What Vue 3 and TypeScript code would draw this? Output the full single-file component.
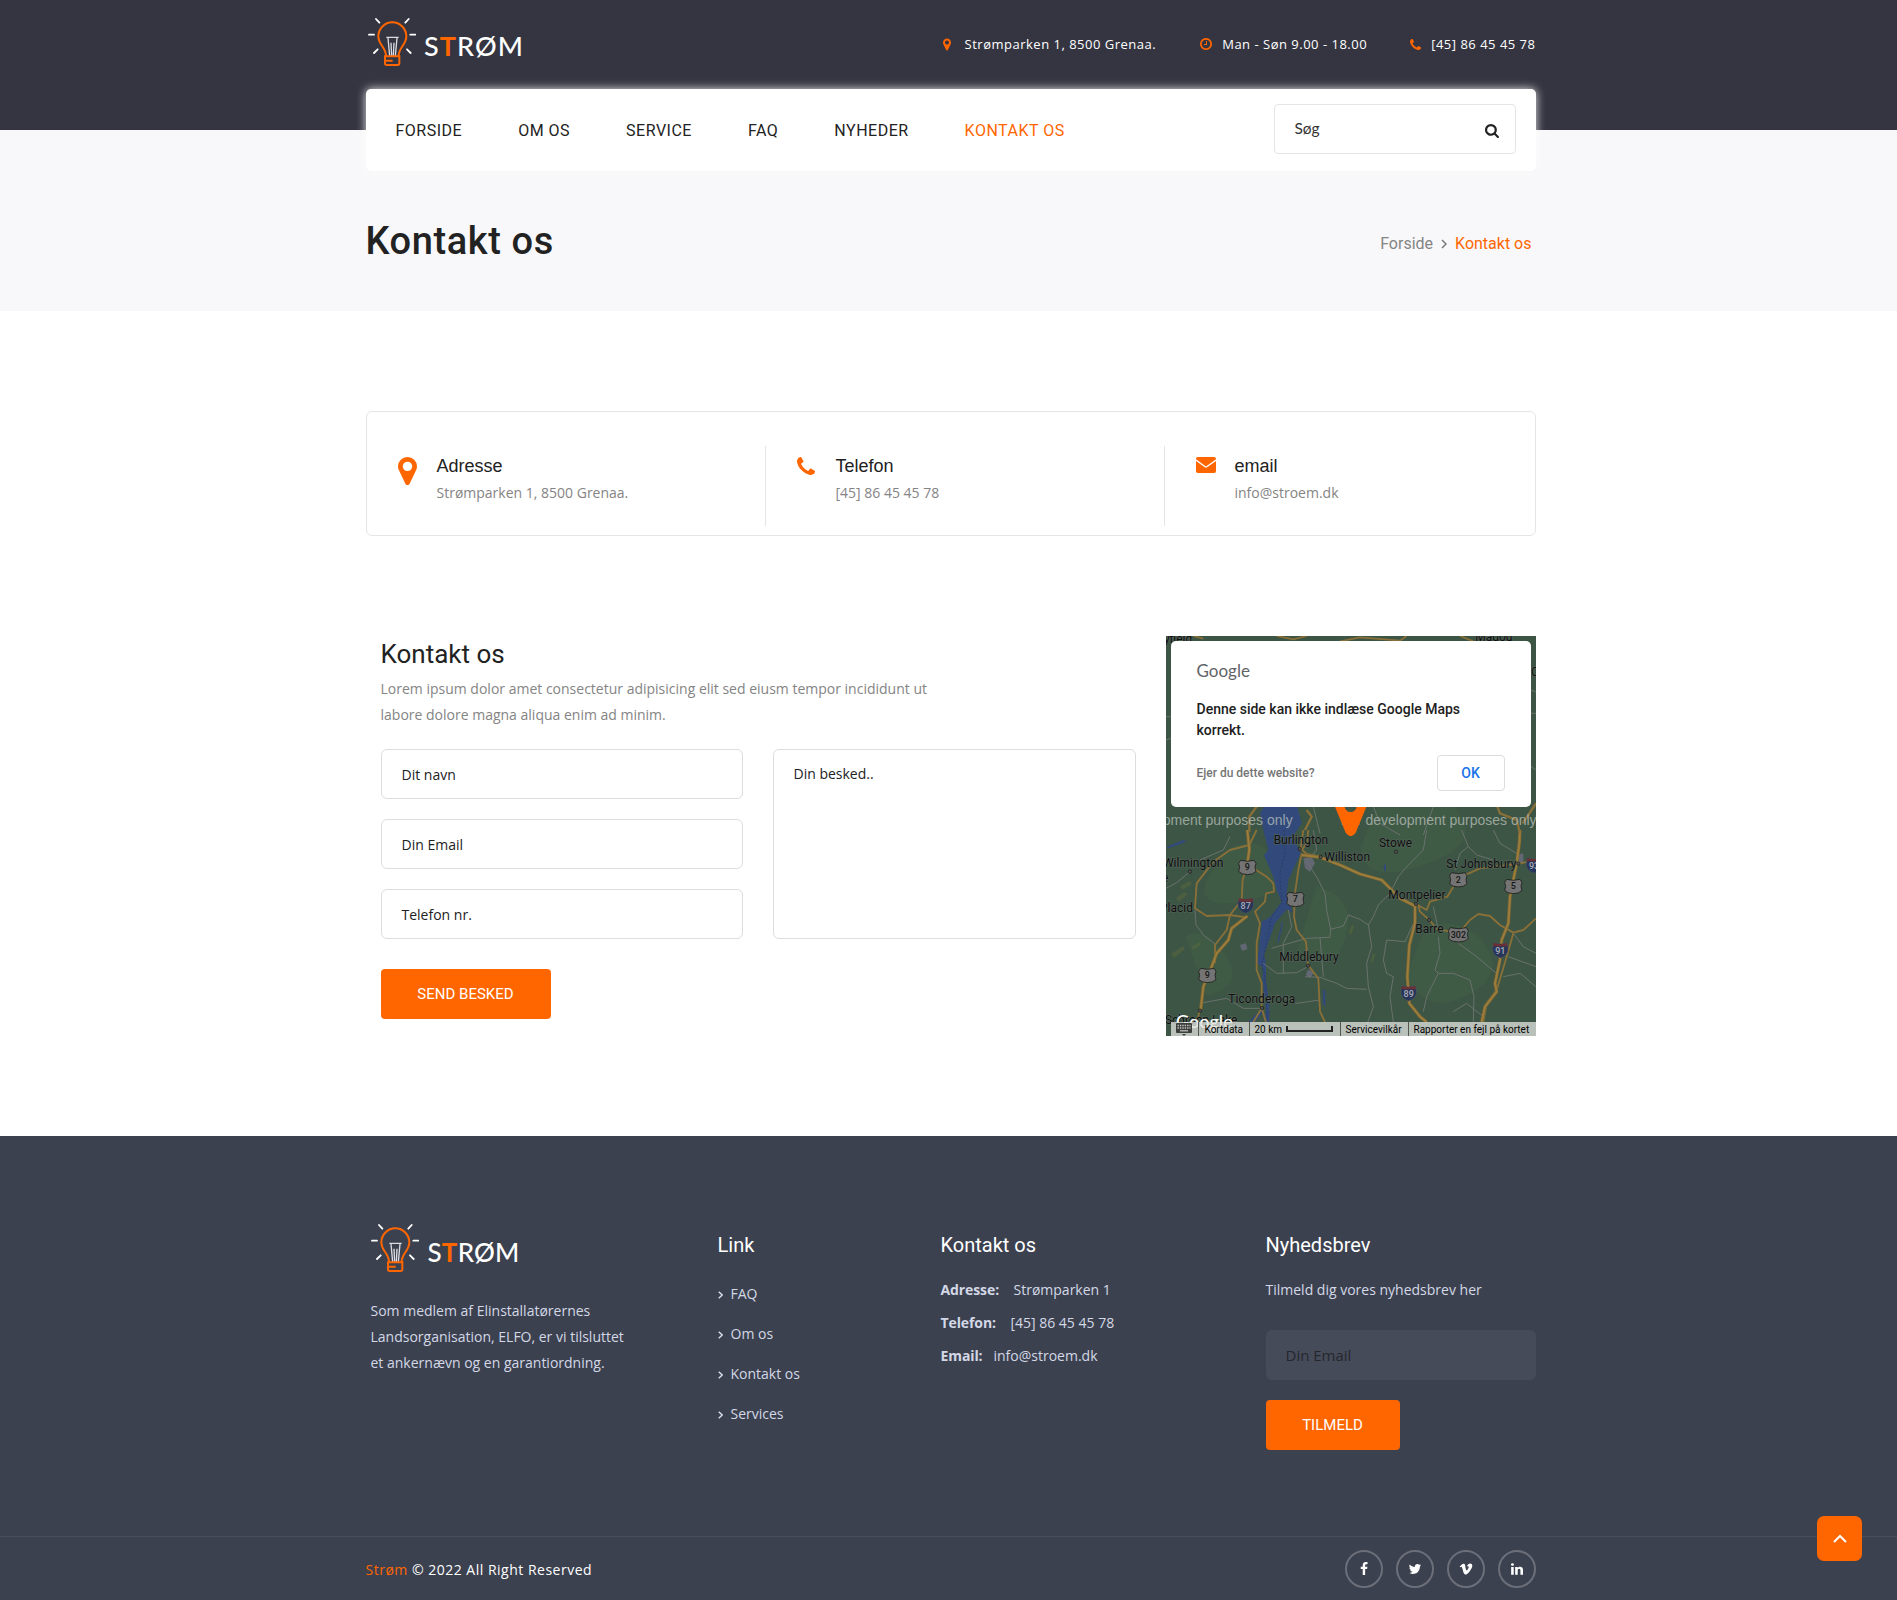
<script setup lang="ts">
interface NavItem { label: string; active?: boolean }
interface InfoItem { icon: string; title: string; text: string; w: number; h: number; box: string }

const icons: Record<string, string> = {
  pin: 'M1152 640q0-106-75-181t-181-75-181 75-75 181 75 181 181 75 181-75 75-181zm256 0q0 109-33 179l-364 774q-16 33-47.5 52t-67.5 19-67.5-19-46.5-52l-365-774q-33-70-33-179 0-212 150-362t362-150 362 150 150 362z',
  phone: 'M1600 1240q0 27-10 70.5t-21 68.5q-21 50-122 106-94 51-186 51-27 0-53-3.5t-57.5-12.5-47-14.5-55.5-20.5-49-18q-98-35-175-83-127-79-264-216t-216-264q-48-77-83-175-3-9-18-49t-20.5-55.5-14.5-47-12.5-57.5-3.5-53q0-92 51-186 56-101 106-122 25-11 68.5-21t70.5-10q14 0 21 3 18 6 53 76 11 19 30 54t35 63.5 31 53.5q3 4 17.5 25t21.5 35.5 7 28.5q0 20-28.5 50t-62 55-62 53-28.5 46q0 9 5 22.5t8.5 20.5 14 24 11.5 19q76 137 174 235t235 174q2 1 19 11.5t24 14 20.5 8.5 22.5 5q18 0 46-28.5t53-62 55-62 50-28.5q14 0 28.5 7t35.5 21.5 25 17.5q25 15 53.5 31t63.5 35 54 30q70 35 76 53 3 7 3 21z',
  clock: 'M1024 544v448q0 14-9 23t-23 9h-320q-14 0-23-9t-9-23v-64q0-14 9-23t23-9h224v-352q0-14 9-23t23-9h64q14 0 23 9t9 23zm416 352q0-148-73-273t-198-198-273-73-273 73-198 198-73 273 73 273 198 198 273 73 273-73 198-198 73-273zm224 0q0 209-103 385.5t-279.5 279.5-385.5 103-385.5-103-279.5-279.5-103-385.5 103-385.5 279.5-279.5 385.5-103 385.5 103 279.5 279.5 103 385.5z',
  search: 'M1216 832q0-185-131.5-316.5t-316.5-131.5-316.5 131.5-131.5 316.5 131.5 316.5 316.5 131.5 316.5-131.5 131.5-316.5zm512 832q0 52-38 90t-90 38q-54 0-90-38l-343-342q-179 124-399 124-143 0-273.5-55.5t-225-150-150-225-55.5-273.5 55.5-273.5 150-225 225-150 273.5-55.5 273.5 55.5 225 150 150 225 55.5 273.5q0 220-124 399l343 343q37 37 37 90z',
  facebook: 'M1343 12v264h-157q-86 0-116 36t-30 108v189h293l-39 296h-254v759h-306v-759h-255v-296h255v-218q0-186 104-288.5t277-102.5q147 0 228 12z',
  twitter: 'M1684 408q-67 98-162 167 1 14 1 42 0 130-38 259.5t-115.5 248.5-184.5 210.5-258 146-323 54.5q-271 0-496-145 35 4 78 4 225 0 401-138-105-2-188-64.5t-114-159.5q33 5 61 5 43 0 85-11-112-23-185.5-111.5t-73.5-205.5v-4q68 38 146 41-66-44-105-115t-39-154q0-88 44-163 121 149 294.5 238.5t371.5 99.5q-8-38-8-74 0-134 94.5-228.5t228.5-94.5q140 0 236 102 109-21 205-78-37 115-142 178 93-10 186-50z',
  vimeo: 'M1709 518q-10 236-332 651-333 431-562 431-142 0-240-263-44-160-132-482-72-262-157-262-18 0-127 76l-77-98q24-21 108-96.5t130-115.5q156-138 241-146 95-9 153 55.5t81 203.5q44 287 66 373 55 249 120 249 51 0 154-161 101-161 109-246 13-139-109-139-57 0-121 26 120-393 459-382 251 8 236 326z',
  linkedin: 'M477 625v991h-330v-991h330zm21-306q1 73-50.5 122t-135.5 49h-2q-82 0-132-49t-50-122q0-74 51.5-122.5t134.5-48.5 133 48.5 51 122.5zm1166 729v568h-329v-530q0-105-40.5-164.5t-126.5-59.5q-63 0-105.5 34.5t-63.5 85.5q-11 30-11 81v553h-329q2-399 2-647t-1-296l-1-48h329v144h-2q20-32 41-56t56.5-52 87-43.5 114.5-15.5q171 0 275 113.5t104 332.5z',
  mail: 'M160 128h1472a160 160 0 0 1 160 160v60L896 1040 0 348v-60A160 160 0 0 1 160 128zM0 520l790 600q106 60 212 0l790-600v984a160 160 0 0 1-160 160H160A160 160 0 0 1 0 1504z',
}

const nav: NavItem[] = [
  { label: 'FORSIDE' }, { label: 'OM OS' }, { label: 'SERVICE' }, { label: 'FAQ' },
  { label: 'NYHEDER' }, { label: 'KONTAKT OS', active: true },
]
const info: InfoItem[] = [
  { icon: 'pin', title: 'Adresse', text: 'Strømparken 1, 8500 Grenaa.', w: 19, h: 28, box: '384 128 1024 1536' },
  { icon: 'phone', title: 'Telefon', text: '[45] 86 45 45 78', w: 18, h: 18, box: '192 128 1408 1408' },
  { icon: 'mail', title: 'email', text: 'info@stroem.dk', w: 20, h: 16, box: '0 128 1792 1536' },
]
const links: string[] = ['FAQ', 'Om os', 'Kontakt os', 'Services']
const socials: string[] = ['facebook', 'twitter', 'vimeo', 'linkedin']
const contact = [
  { k: 'Adresse:', v: 'Strømparken 1', gap: 14.5 },
  { k: 'Telefon:', v: '[45] 86 45 45 78', gap: 14.5 },
  { k: 'Email:', v: 'info@stroem.dk', gap: 11 },
]

const minorRoads: string[] = [
  'M18 175 L50 158 L90 125', 'M105 240 L108 285 L130 315 L165 342', 'M370 430 L370 340 L395 290 L385 240',
  'M460 0 L470 60 L440 95 L470 140 L495 190 L500 240 L512 298 L550 288 L565 255 L600 268 L625 285 L640 260 L655 225 L690 190 L715 140 L740 110 L790 60 L800 0',
  'M512 298 L510 322 L440 325 L370 345 L335 355', 'M625 285 L635 350 L620 400 L625 470 L640 530 L615 600',
  'M435 440 L480 442 L530 460 L560 475 L620 478', 'M310 400 L350 430 L410 428 L440 412', 'M680 330 L670 390 L680 430 L700 440 L690 500 L700 576',
  'M680 330 L735 335 L770 260', 'M835 320 L840 370 L825 420 L835 430 L800 500 L790 545', 'M895 340 L950 380 L985 410 L1010 430',
  'M835 430 L880 430 L930 450 L942 500 L940 575', 'M905 0 L925 50 L900 70 L885 120', 'M925 50 L950 75 L1000 90',
  'M130 518 L200 505 L250 535 L300 535', 'M480 322 L490 440', 'M1060 310 L1090 350 L1128 370', 'M1045 380 L1128 410', 'M1030 440 L1080 430 L1128 470',
  'M350 495 L410 520 L480 510', 'M880 545 L920 520 L970 560', 'M820 230 L835 300', 'M1000 0 L1020 40 L1070 70', 'M210 20 L190 60 L120 90',
]
const majorRoads: string[] = [
  'M262 0 L270 55 L262 100 L248 150 L245 210', 'M268 45 L210 60 L160 95 L110 160 L105 235 L140 258 L210 255 L258 262',
  'M290 0 L268 45', 'M280 115 L320 140 L340 160 L342 185 L318 190 L315 215 L285 245 L300 280 L290 340 L290 420 L305 460 L305 535 L280 576',
  'M245 210 L210 255 L200 300 L165 345 L165 400', 'M425 70 L415 120 L405 190 L402 260 L410 300 L438 335 L444 405 L475 445 L480 545 L495 576',
  'M430 0 L422 55 L440 72 L482 80', 'M445 0 L440 40 L425 60', 'M768 222 L800 240 L810 215 L862 200 L880 170', 'M905 140 L960 115 L1072 102 L1128 90',
  'M775 225 L780 245 L808 270 L830 295 L868 305', 'M900 305 L930 270 L955 252 L990 258 L1020 285 L1060 308 L1090 300 L1128 265',
  'M305 535 L318 576', 'M1060 310 L1040 380 L1010 480 L980 520 L970 576', 'M120 540 L110 576',
]
const highways: string[] = [
  'M425 75 L482 82 L540 105 L600 132 L665 150 L720 205 L765 228 L765 280 L748 345 L742 440 L748 520 L780 560 L800 576',
  'M1080 0 L1078 40 L1070 100 L1050 200 L1045 280 L1025 330 L1020 390 L1005 460 L1010 485 L975 530 L965 576',
  'M262 258 L215 295 L205 330 L170 370 L155 410 L130 470 L122 540', 'M262 0 L268 60 L262 100',
]
const places = [
  { x: 341, y: 41, t: 'Burlington' }, { x: 657, y: 51, t: 'Stowe' }, { x: 493, y: 92, t: 'Williston' },
  { x: 9, y: 111, t: 'Wilmington' }, { x: 859, y: 113, t: 'St Johnsbury' }, { x: 685, y: 207, t: 'Montpelier' },
  { x: 0, y: 245, t: 'Placid' }, { x: 766, y: 309, t: 'Barre' }, { x: 358, y: 393, t: 'Middlebury' },
  { x: 205, y: 519, t: 'Ticonderoga' }, { x: 15, y: 583, t: 'Schroon Lake' }, { x: -14, y: 156, t: 'ne' },
]
const dots = [[90, 125], [419, 57], [482, 81], [708, 65], [1075, 101], [768, 222], [807, 270], [444, 407], [306, 534], [120, 542]]
const shields = [
  { x: 262, y: 112, t: '9' }, { x: 406, y: 208, t: '7' }, { x: 895, y: 149, t: '2' },
  { x: 1060, y: 169, t: '5' }, { x: 142, y: 436, t: '9' }, { x: 895, y: 314, t: '302' },
]
const interstates = [
  { x: 257, y: 227, t: '87' }, { x: 1021, y: 361, t: '91' }, { x: 746, y: 490, t: '89' }, { x: 1122, y: 106, t: '93' },
]
</script>

<template>
  <div class="page">
    <header class="top">
      <div class="wrap top-row">
        <div class="logo">
          <svg class="bulb" viewBox="0 0 144 144" width="48" height="48">
            <g fill="none" stroke="#fff" stroke-width="5.5" stroke-linecap="round">
              <path d="M3 50h15M127 50h15M24 3l10 11M122 3l-10 11M18 105l11-11M128 105l-11-11" />
              <path d="M55 58h37M60 60l5 54M87 60l-5 54M69 74l2 40M78 74l-2 40" stroke-width="4" stroke="#dcdce2" stroke-linecap="butt" />
            </g>
            <g fill="none" stroke="#f60" stroke-width="6">
              <path d="M54 114C54 86 31 82 31 55a42 42 0 0 1 84 0C115 82 92 86 92 114" />
              <path d="M51 115h43v21q0 5-5 5H56q-5 0-5-5zM54 128h20" />
            </g>
          </svg>
          <span class="brand">S<b>T</b>RØM</span>
        </div>
        <div class="top-info">
          <span class="ti"><svg viewBox="384 128 1024 1536" width="8" height="13"><path :d="icons.pin" /></svg>Strømparken 1, 8500 Grenaa.</span>
          <span class="ti t2"><svg viewBox="128 128 1536 1536" width="12" height="12"><path :d="icons.clock" /></svg>Man - Søn 9.00 - 18.00</span>
          <span class="ti t3"><svg viewBox="192 128 1408 1408" width="11" height="11"><path :d="icons.phone" /></svg>[45] 86 45 45 78</span>
        </div>
      </div>
    </header>

    <section class="hero">
      <div class="wrap">
        <nav class="card">
          <ul>
            <li v-for="n in nav" :key="n.label" :class="{ active: n.active }">{{ n.label }}</li>
          </ul>
          <div class="search">
            <span>Søg</span>
            <svg viewBox="64 128 1664 1664" width="14" height="14"><path :d="icons.search" /></svg>
          </div>
        </nav>
        <div class="title-row">
          <h1>Kontakt os</h1>
          <div class="crumbs">
            <span>Forside</span>
            <svg viewBox="0 0 6 10" width="6" height="10"><path d="M1 1l4 4-4 4" fill="none" stroke="#777" stroke-width="1.5" /></svg>
            <span class="here">Kontakt os</span>
          </div>
        </div>
      </div>
    </section>

    <main class="wrap">
      <div class="info">
        <div v-for="i in info" :key="i.title" class="cell">
          <div class="ico"><svg :viewBox="i.box" :width="i.w" :height="i.h" preserveAspectRatio="none"><path :d="icons[i.icon]" /></svg></div>
          <div>
            <h4>{{ i.title }}</h4>
            <p>{{ i.text }}</p>
          </div>
        </div>
      </div>

      <div class="content">
        <form class="form">
          <h2>Kontakt os</h2>
          <p>Lorem ipsum dolor amet consectetur adipisicing elit sed eiusm tempor incididunt ut<br>labore dolore magna aliqua enim ad minim.</p>
          <div class="fields">
            <div class="col">
              <div class="field">Dit navn</div>
              <div class="field">Din Email</div>
              <div class="field">Telefon nr.</div>
            </div>
            <div class="area">Din besked..</div>
          </div>
          <div class="btn send">SEND BESKED</div>
        </form>

        <div class="map">
          <svg width="370" height="400" viewBox="0 0 370 400">
            <rect width="370" height="400" fill="#3d5544" />
            <g fill="#446149" opacity=".4">
              <path d="M60 215q30-20 50 10t-30 40-40-20zM150 250q40 10 30 50t-50 20zM215 160q60-10 80 20t-40 50-60-20zM260 290q40-10 60 20t-20 50-60-20zM20 300q20-10 40 20t-20 40z" />
            </g>
            <g fill="#5c6a3c" opacity=".5">
              <path d="M10 262l8-6 4 2-9 8zM14 250l10-5 2 3-10 6zM5 318l12-8 2 3-11 9zM26 310l8-4 1 3-8 5zM183 296l3-8 2 3-3 8zM205 325l2-8 2 2-2 8z" />
            </g>
            <g transform="translate(-6 194) scale(.33333)">
              <path d="M322 -85 L300 -50 310 0 325 60 312 75 340 140 350 180 365 215 330 262 305 275 300 330 292 400 308 412 308 450 318 540 314 576 328 576 328 520 318 450 318 400 312 375 345 280 380 238 398 248 380 190 385 150 410 95 422 70 398 20 425 -20 410 -80 330 -90z" fill="#324a7b" />
              <path d="M352 335l14-60 3 5-13 58zM20 50l50-20 10 5-55 20zM490 478l6 2v50l-8-10zM265 576l40-40 5 10-25 30zM670 110l8-10v30z" fill="#324a7b" />
              <path d="M372 0l3 70-15 60 5 90-30 40-30 150 8 20 10 140" fill="none" stroke="#25355c" stroke-width="2" stroke-dasharray="6 5" />
              <g fill="#626773"><path d="M430 85l25-5 10 20-15 25-15-10zM445 418l18 10-14 16-12-10zM240 345l18-5 4 18-16 4zM1068 75l22-5v30l-22 8z" /></g>
              <g fill="none" stroke="#69716d" stroke-width="3"><path v-for="d in minorRoads" :key="d" :d="d" /></g>
              <g fill="none" stroke="#8a7038" stroke-width="5.5" stroke-linejoin="round"><path v-for="d in majorRoads" :key="d" :d="d" /></g>
              <g fill="none" stroke="#7c6530" stroke-width="10" stroke-linejoin="round"><path v-for="d in highways" :key="d" :d="d" /></g>
              <g fill="none" stroke="#9a7d3d" stroke-width="6" stroke-linejoin="round"><path v-for="d in highways" :key="d" :d="d" /></g>
              <path d="M270 -110l20 40-22 30 0 45M440 -60l15 20-20 40M1000 -100l20 50 50 20 10 40M1128 -80l-40 60" fill="none" stroke="#8a7038" stroke-width="7" />
              <g fill="#555" stroke="#151515" stroke-width="2"><circle v-for="(d, k) in dots" :key="k" :cx="d[0]" :cy="d[1]" r="5" /></g>
              <g class="shield">
                <g v-for="(s, k) in shields" :key="k" :transform="`translate(${s.x} ${s.y})`">
                  <path :d="s.t.length > 1 ? 'M-24-21Q0-15 24-21L30-12 27 0 30 12Q20 22 0 22T-30 12L-27 0-30-12z' : 'M-20-21Q0-15 20-21L26-12 23 0 26 12Q18 22 0 22T-26 12L-23 0-26-12z'" fill="#747474" stroke="#1d1d1d" stroke-width="2.5" />
                  <text y="9" text-anchor="middle" fill="#161616">{{ s.t }}</text>
                </g>
                <g v-for="(s, k) in interstates" :key="'i' + k" :transform="`translate(${s.x} ${s.y})`">
                  <path d="M-20-22Q0-16 20-22L23-8Q26 14 0 23-26 14-23-8z" fill="#28355a" stroke="#4d5668" stroke-width="1.5" />
                  <path d="M-20-22Q0-16 20-22L22-12H-22z" fill="#6b3034" />
                  <text y="10" text-anchor="middle" fill="#a9adb8">{{ s.t }}</text>
                </g>
              </g>
              <g class="place"><text v-for="p in places" :key="p.t" :x="p.x" :y="p.y">{{ p.t }}</text></g>
            </g>
            <g transform="translate(-6 -6) scale(.33333)">
              <path d="M100 18l30 8M350 18l50 10 40-10M540 34l60-12 120 10 20-14M900 18l40 16" fill="none" stroke="#8a7038" stroke-width="5" />
              <path d="M18 330l60-20M1112 180l16 6M1112 250h16M18 260h15M460 530l20 80M640 530l20 50 60 35M820 530l-30 85M1100 400l28 20" fill="none" stroke="#69716d" stroke-width="3" />
              <g class="place"><text x="-39" y="38">Mayfield</text><text x="946" y="34">Magog</text><text x="1113" y="138">C</text></g>
              <g class="mark"><text x="398" y="586" text-anchor="end">For development purposes only</text><text x="542" y="586">For development purposes only</text></g>
              <path d="M524 528h96l-33 80q-15 22-30 0z" fill="#f60" />
              <path d="M553 528q4 18 19 18t19-18z" fill="#3d5544" />
            </g>
            <text x="10" y="392" class="goog">Google</text>
          </svg>
          <div class="strip">
            <span class="kb">
              <svg viewBox="0 0 16 13" width="16" height="13"><rect width="16" height="10" rx="1" fill="#3d3f3d" /><path d="M1.5 2.5h13M1.5 5h13" stroke="#c5c9c2" stroke-width="1.3" stroke-dasharray="1.4 1" /><path d="M4 7.8h8" stroke="#c5c9c2" stroke-width="1.2" /><path d="M6 11h4l-2 2z" fill="#3d3f3d" /></svg>
            </span>
            <span class="s1">Kortdata</span>
            <span class="s2">20 km<i></i></span>
            <span class="s3">Servicevilkår</span>
            <span class="s4">Rapporter en fejl på kortet</span>
          </div>
          <div class="dialog">
            <div class="g">Google</div>
            <div class="msg">Denne side kan ikke indlæse Google Maps<br>korrekt.</div>
            <div class="act"><span>Ejer du dette website?</span><span class="ok">OK</span></div>
          </div>
        </div>
      </div>
    </main>

    <footer>
      <div class="wrap foot">
        <div class="f1">
          <div class="logo">
            <svg class="bulb" viewBox="0 0 144 144" width="48" height="48">
              <g fill="none" stroke="#fff" stroke-width="5.5" stroke-linecap="round">
                <path d="M3 50h15M127 50h15M24 3l10 11M122 3l-10 11M18 105l11-11M128 105l-11-11" />
                <path d="M55 58h37M60 60l5 54M87 60l-5 54M69 74l2 40M78 74l-2 40" stroke-width="4" stroke="#dcdce2" stroke-linecap="butt" />
              </g>
              <g fill="none" stroke="#f60" stroke-width="6">
                <path d="M54 114C54 86 31 82 31 55a42 42 0 0 1 84 0C115 82 92 86 92 114" />
                <path d="M51 115h43v21q0 5-5 5H56q-5 0-5-5zM54 128h20" />
              </g>
            </svg>
            <span class="brand small">S<b>T</b>RØM</span>
          </div>
          <p>Som medlem af Elinstallatørernes<br>Landsorganisation, ELFO, er vi tilsluttet<br>et ankernævn og en garantiordning.</p>
        </div>
        <div class="f2">
          <h3>Link</h3>
          <ul>
            <li v-for="l in links" :key="l"><svg viewBox="0 0 5 8" width="5" height="8"><path d="M.7.7L4.2 4 .7 7.3" fill="none" stroke="#dfe3ee" stroke-width="1.3" /></svg>{{ l }}</li>
          </ul>
        </div>
        <div class="f3">
          <h3>Kontakt os</h3>
          <p v-for="c in contact" :key="c.k"><b :style="{ marginRight: c.gap + 'px' }">{{ c.k }}</b>{{ c.v }}</p>
        </div>
        <div class="f4">
          <h3>Nyhedsbrev</h3>
          <p>Tilmeld dig vores nyhedsbrev her</p>
          <div class="mailbox">Din Email</div>
          <div class="btn join">TILMELD</div>
        </div>
      </div>
      <div class="bottom">
        <div class="wrap brow">
          <div class="copy"><span>Strøm</span> © 2022 All Right Reserved</div>
          <div class="soc">
            <span v-for="s in socials" :key="s"><svg viewBox="0 0 1792 1792" width="14" height="14"><path :d="icons[s]" /></svg></span>
          </div>
        </div>
      </div>
    </footer>
    <div class="totop"><svg viewBox="0 0 14 9" width="14" height="9"><path d="M1 8l6-6 6 6" fill="none" stroke="#fff" stroke-width="2" /></svg></div>
  </div>
</template>

<style>
body { margin: 0; background: #fff; }
</style>

<style scoped>
* { box-sizing: border-box; }
h1, h2, h3, h4, p, ul { margin: 0; padding: 0; font-weight: 400; list-style: none; }
.page { position: relative; width: 1897px; height: 1600px; overflow: hidden; font-family: "Open Sans", sans-serif; font-size: 14px; line-height: 26px; color: #848484; }
.wrap { width: 1170px; margin-left: 365.5px; }
.top { height: 130px; background: #343541; }
.top-row { display: flex; justify-content: space-between; align-items: flex-start; }
.logo { display: flex; }
.top .logo { padding: 18px 0 0 2.5px; }
.bulb { display: block; }
.brand { font: 500 27px/32px Lato, sans-serif; color: #fff; letter-spacing: 1.1px; margin: 12px 0 0 8px; }
.brand b { color: #f60; font-weight: 700; }
.brand.small { font-size: 26px; letter-spacing: 0.2px; margin: 12px 0 0 9px; }
.top-info { display: flex; padding-top: 31px; color: #fff; font-size: 13px; letter-spacing: 0.5px; white-space: nowrap; }
.ti { display: flex; align-items: center; }
.ti svg { fill: #f60; margin-right: 14px; }
.t2 { margin-left: 44px; }
.t2 svg, .t3 svg { margin-right: 10px; }
.t3 { margin-left: 43px; }
.hero { height: 181px; background: #f8f8fa; }
.card { position: relative; top: -41px; height: 82px; background: #fff; border-radius: 5px; box-shadow: 0 0 10px rgba(255, 255, 255, 0.9), 0 1px 3px rgba(0, 0, 0, 0.03); display: flex; justify-content: space-between; align-items: flex-start; padding: 15px 20px 0 30px; }
.card ul { display: flex; gap: 56px; font: 400 16px/24px Roboto, sans-serif; letter-spacing: 0.5px; color: #222; padding-top: 15px; white-space: nowrap; }
.card .active { color: #f60; }
.search { width: 242px; height: 50px; border: 1px solid #e5e5e5; border-radius: 4px; display: flex; justify-content: space-between; align-items: center; padding: 0 16px 0 20px; font-family: Lato, sans-serif; font-size: 15.5px; color: #333; }
.search span { position: relative; top: -1px; }
.search svg { fill: #222; position: relative; top: 2px; }
.title-row { display: flex; justify-content: space-between; margin-top: 6px; }
h1 { font: 500 38px/46px Roboto, sans-serif; letter-spacing: 0.6px; color: #222; }
.crumbs { display: flex; align-items: center; height: 26px; margin: 13px 4px 0 0; font: 400 16px/26px Roboto, sans-serif; color: #848484; }
.crumbs svg { margin: 0 8px 0 8px; }
.here { color: #f60; }
.info { margin-top: 100px; height: 125px; border: 1px solid #e5e5e5; border-radius: 6px; display: flex; padding-top: 34px; }
.cell { width: 399px; height: 80px; border-right: 1px solid #e5e5e5; display: flex; padding: 8px 0 0 31px; }
.cell:last-child { border: 0; width: 370px; }
.ico { width: 39px; padding-top: 3px; }
.ico svg { display: block; fill: #f60; }
h4 { font: 400 18px/24px "Liberation Sans", Arial, sans-serif; color: #222; margin-bottom: 2px; }
.content { display: flex; justify-content: space-between; margin-top: 100px; height: 400px; }
.form { width: 770px; padding-left: 15px; }
h2 { font: 400 26px/32px Roboto, sans-serif; color: #222; padding-top: 2px; }
.form p { margin-top: 6px; }
.fields { display: flex; gap: 30px; margin-top: 21px; }
.col { display: flex; flex-direction: column; gap: 20px; }
.field { width: 362px; height: 50px; border: 1px solid #ddd; border-radius: 6px; color: #222; padding: 12px 20px 0; }
.area { width: 363px; height: 190px; border: 1px solid #ddd; border-radius: 6px; color: #222; padding: 11px 20px; }
.btn { background: #f60; border-radius: 4px; height: 50px; color: #fff; font: 400 15px/50px Roboto, sans-serif; text-align: center; }
.send { width: 170px; margin-top: 30px; }
.map { position: relative; width: 370px; height: 400px; overflow: hidden; }
.map > svg { display: block; }
.place { font: 400 36px Roboto, sans-serif; fill: #0d0d0d; stroke: #5a6860; stroke-width: 3px; paint-order: stroke; }
.shield { font: 500 27px Roboto, sans-serif; }
.mark { font: 400 42px "Liberation Sans", sans-serif; fill: #b9c0bb; opacity: 0.75; }
.goog { font: 500 18px Lato, sans-serif; fill: #fff; }
.strip { position: absolute; left: 5px; right: 0; bottom: 0; height: 14px; background: rgba(222, 224, 219, 0.78); display: flex; font: 400 10px/15px Roboto, sans-serif; color: #000; white-space: nowrap; }
.strip > span { border-left: 1px solid #54594f; padding-left: 5px; }
.strip .kb { border: 0; width: 27px; height: 14px; }
.kb svg { display: block; margin-top: 1px; }
.strip .s1 { width: 51px; padding-left: 6px; }
.strip .s2 { width: 91px; display: flex; }
.s2 i { width: 47px; height: 6px; border: 2px solid #222; border-top: 0; margin: 4px 0 0 4px; }
.strip .s3 { width: 68px; }
.dialog { position: absolute; left: 5px; top: 5px; width: 360px; height: 166px; background: #fff; border-radius: 5px; padding: 18px 26px; font-family: Roboto, sans-serif; }
.g { font: 400 17px/24px Lato, sans-serif; color: #5f6368; }
.msg { font-weight: 500; font-size: 14px; line-height: 21px; color: #212121; margin-top: 16px; white-space: nowrap; }
.act { display: flex; justify-content: space-between; align-items: center; margin-top: 14px; font-size: 12px; font-weight: 500; color: #757575; }
.ok { width: 68px; height: 36px; border: 1px solid #dadce0; border-radius: 4px; color: #1a73e8; font: 500 14px/34px Roboto, sans-serif; text-align: center; }
footer { margin-top: 100px; height: 464px; background: #3c414f; color: #d3d8e6; }
.foot { display: flex; height: 400px; }
.f1 { width: 352px; padding: 88px 0 0 5px; }
.f1 p { margin-top: 26px; white-space: nowrap; }
h3 { font: 400 20px/26px Roboto, sans-serif; color: #fff; }
.f2 { width: 223px; padding-top: 96px; }
.f2 li { display: flex; align-items: center; height: 26px; margin-bottom: 14px; }
.f2 ul { padding-top: 23px; }
.f2 li svg { margin: 2px 8px 0 0; }
.f3 { width: 325px; padding-top: 96px; }
.f3 p { height: 33px; }
.f3 h3, .f4 h3 { margin-bottom: 19px; }
.f3 b { font-weight: 700; letter-spacing: -0.1px; }
.f4 { width: 270px; padding-top: 96px; }
.mailbox { margin-top: 27px; height: 50px; border-radius: 6px; background: #464b59; color: #25272d; font-size: 15px; line-height: 50px; padding-left: 20px; }
.join { width: 134px; margin-top: 20px; }
.bottom { border-top: 1px solid #4a4e5b; height: 64px; }
.brow { display: flex; justify-content: space-between; padding-top: 13px; }
.copy { color: #fff; letter-spacing: 0.5px; margin-top: 7px; }
.copy span { color: #f60; }
.soc { display: flex; gap: 13px; }
.soc span { width: 38px; height: 38px; border: 2px solid #6c6f79; border-radius: 50%; display: flex; align-items: center; justify-content: center; }
.soc svg { fill: #fff; }
.totop { position: absolute; left: 1817px; top: 1516px; width: 45px; height: 45px; border-radius: 7px; background: #f60; display: flex; align-items: center; justify-content: center; }
</style>
